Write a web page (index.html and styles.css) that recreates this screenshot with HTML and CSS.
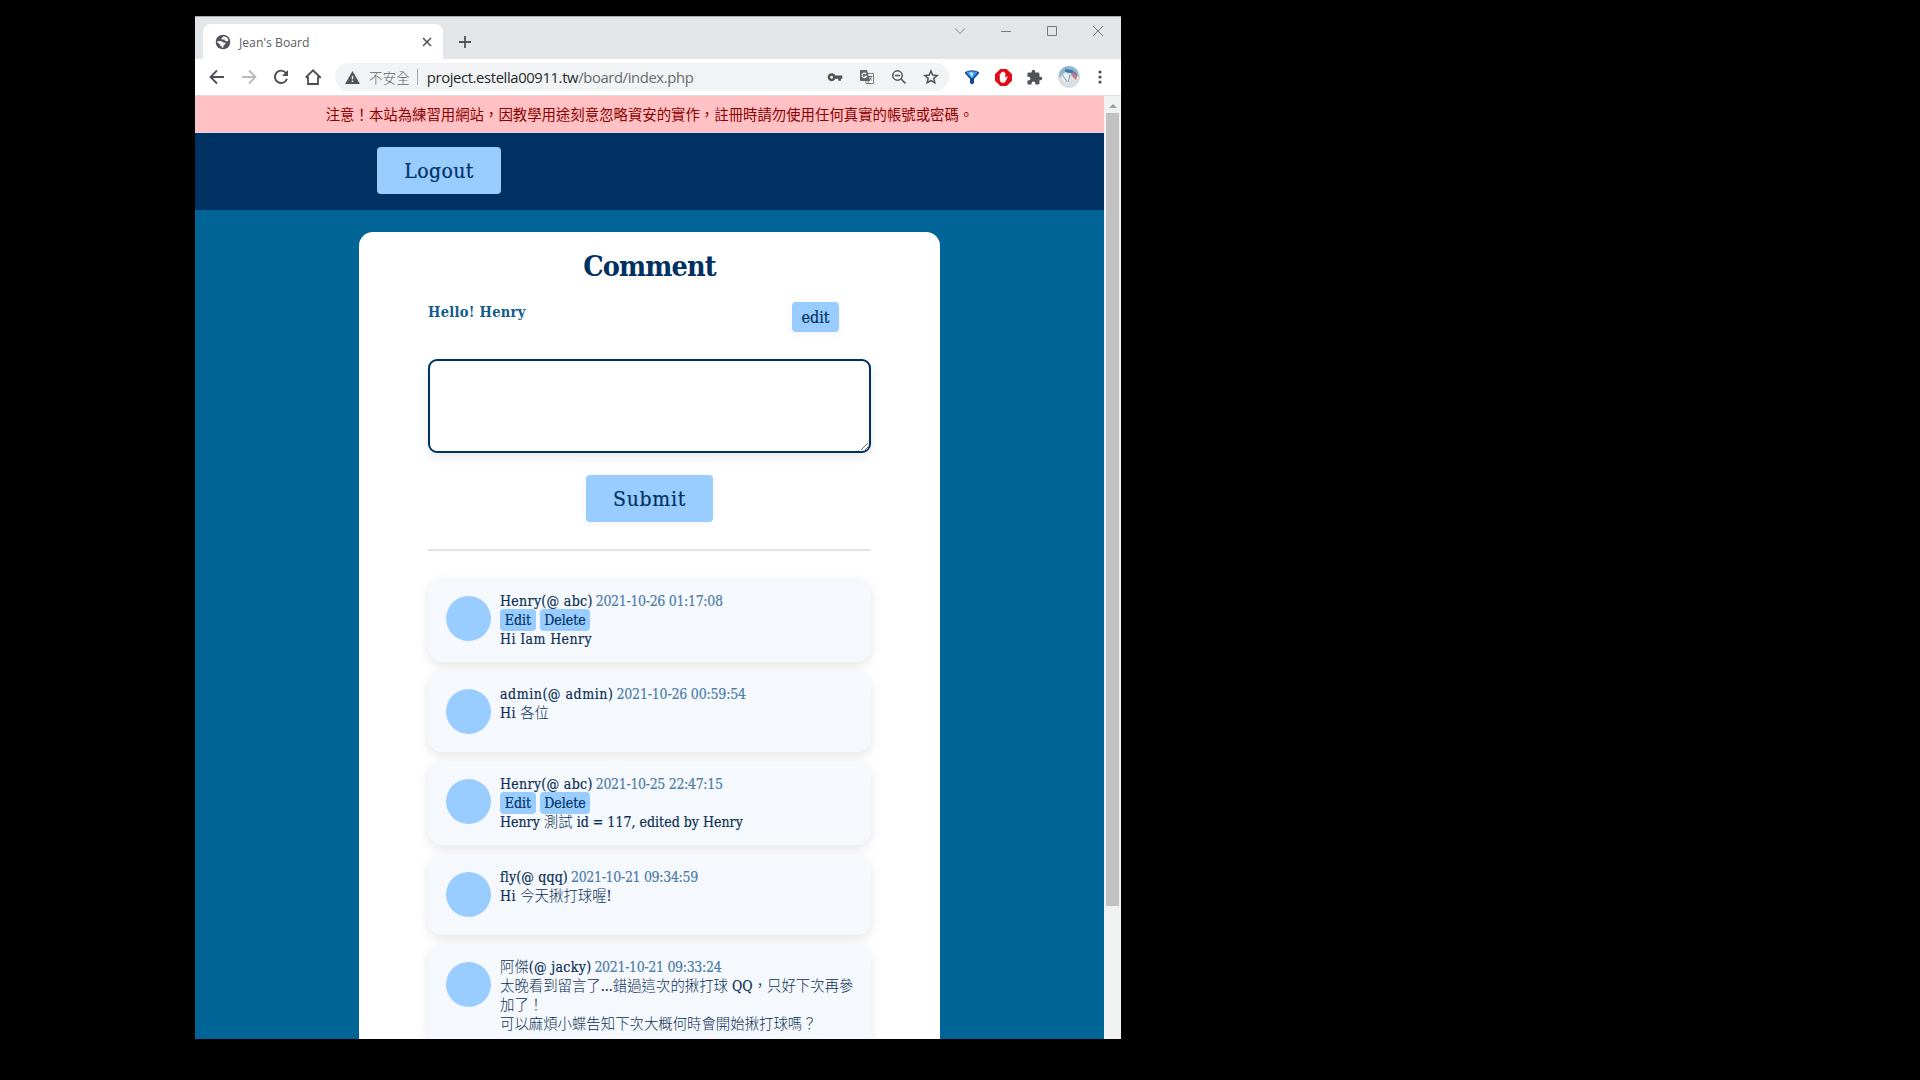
FILE: index.html
```
<!DOCTYPE html>
<html lang="zh-Hant">
<head>
<meta charset="utf-8">
<title>Jean's Board</title>
<link rel="stylesheet" href="styles.css">
</head>
<body>
<div class="window">
  <div class="tabstrip">
    <div class="tab">
      <svg class="globe" viewBox="0 0 24 24" width="16" height="16"><circle cx="12" cy="12" r="11" fill="#505357"/><path fill="#fff" d="M3.200 12.500l1-2 6 .2 2 2 3.300.5v2.300l-2.500 1-.5 3.800-2.300.5v-2.500l-2-.3-1-2.800zM10 6l3-2.800 5 2 2.500 4-2.500 2-3-1.200-1-2-4 .5z"/></svg>
      <span class="tab-title">Jean's Board</span>
      <svg class="tab-close" viewBox="0 0 10 10" width="10" height="10"><path d="M1 1l8 8M9 1L1 9" stroke="#4b4e52" stroke-width="1.500"/></svg>
    </div>
    <svg class="new-tab" viewBox="0 0 14 14" width="14" height="14"><path d="M7 1v12M1 7h12" stroke="#505357" stroke-width="1.800"/></svg>
    <div class="controls">
      <svg viewBox="0 0 12 12" width="12" height="12"><path d="M1 3.500l5 5 5-5" fill="none" stroke="#777b80"/></svg>
      <svg viewBox="0 0 12 12" width="12" height="12"><path d="M1 6.500h10" stroke="#777b80"/></svg>
      <svg viewBox="0 0 12 12" width="12" height="12"><path d="M1.500 1.500h9v9h-9z" fill="none" stroke="#777b80"/></svg>
      <svg viewBox="0 0 12 12" width="12" height="12"><path d="M1 1l10 10M11 1L1 11" stroke="#777b80"/></svg>
    </div>
  </div>
  <div class="toolbar">
    <svg viewBox="0 0 16 16" width="16" height="16"><path d="M15 8H2M8 1.500L1.500 8 8 14.500" fill="none" stroke="#4b4e52" stroke-width="1.800"/></svg>
    <svg viewBox="0 0 16 16" width="16" height="16"><path d="M1 8h13M8 1.500L14.500 8 8 14.500" fill="none" stroke="#b7b9bb" stroke-width="1.800"/></svg>
    <svg viewBox="0 0 16 16" width="16" height="16"><path d="M13.200 4.300A6.200 6.200 0 1 0 14 9.800" fill="none" stroke="#4b4e52" stroke-width="1.900"/><path d="M15 1v6H9z" fill="#4b4e52"/></svg>
    <svg viewBox="1 1 16 16" width="16" height="16"><path d="M4 8.500V16h10V8.500M1.800 9.300L9 2.300l7.200 7H14M1.800 9.300H4" fill="none" stroke="#4b4e52" stroke-width="1.800"/></svg>
    <div class="omnibox">
      <svg class="warn" viewBox="0 0 16 14" width="15" height="13"><path d="M8 0l8 14H0z" fill="#505357"/><path d="M7.200 5h1.600v4H7.200zM7.200 10.300h1.600v1.600H7.200z" fill="#f1f3f4"/></svg>
      <span class="insecure">不安全</span>
      <span class="divider"></span>
      <span class="url"><b>project.estella00911.tw</b>/board/index.php</span>
      <div class="omni-icons">
        <svg viewBox="0 0 16 16" width="16" height="16"><path fill="#505357" fill-rule="evenodd" d="M8.300 6.600h7v3.200h-1.400v2h-2.700v-2H8.300a4 4 0 1 1 0-3.200zM4.600 6.800a1.500 1.500 0 1 0 0 3 1.500 1.500 0 0 0 0-3z"/></svg>
        <svg viewBox="0 0 16 16" width="16" height="16"><path d="M7 4.500h7.500v10H7z" fill="#fff" stroke="#777b80"/><path fill="#606368" d="M1 1h7l3 11H2a1 1 0 0 1-1-1z"/><path d="M7.200 5A2.300 2.300 0 1 0 7.500 7.300H5.500" fill="none" stroke="#fff" stroke-width="1.100"/><path d="M9 7.500h4.500M11.300 6.500v1M12.500 7.800c-.5 1.700-1.300 2.700-2.500 3.700M10.500 8.500c.5 1.300 1.500 2.300 2.600 3M9 12l1 2" fill="none" stroke="#606368" stroke-width=".9"/></svg>
        <svg viewBox="0 0 16 16" width="16" height="16"><circle cx="6.500" cy="6.500" r="4.700" fill="none" stroke="#505357" stroke-width="1.500"/><path d="M4 6.500h5M10 10l4.500 4.500" stroke="#505357" stroke-width="1.600"/></svg>
        <svg viewBox="0 0 16 16" width="16" height="16"><path d="M8 2l1.700 4.100 4.500.4-3.400 2.900 1 4.400L8 11.500l-3.800 2.300 1-4.400-3.400-2.900 4.500-.4z" fill="none" stroke="#505357" stroke-width="1.500"/></svg>
      </div>
    </div>
    <div class="extensions">
      <svg viewBox="0 0 16 16" width="16" height="16"><path d="M1 3Q8-.5 15 3q.4 1.500-1 2.500L10 10v4L8 15.500 6 14v-4L2 5.500Q.6 4.500 1 3z" fill="#124a91"/><path d="M2.200 3.600Q8 1 13.500 3.500L9 9H7z" fill="#3d93e0"/><path d="M5 3.500l3 5 1.500-5z" fill="#c5e8ff"/></svg>
      <svg viewBox="0 0 16 16" width="17" height="17"><path d="M5 0h6l5 5v6l-5 5H5l-5-5V5z" fill="#e20a17"/><path d="M4.500 8V5c0-.9 1.200-.9 1.200 0V3.500c0-.9 1.300-.9 1.300 0V3c0-.9 1.400-.9 1.400 0v.7c0-.9 1.300-.9 1.300 0v4.500l1-1c.7-.6 1.400 0 1 .7L10 11.500C9.300 12.600 8.500 13 7.500 13c-1.800 0-3-1.300-3-3z" fill="#fff"/></svg>
      <svg viewBox="0 0 24 24" width="17" height="17"><path fill="#505357" d="M20.500 11H19V7a2 2 0 0 0-2-2h-4V3.500a2.500 2.500 0 0 0-5 0V5H4a2 2 0 0 0-2 2v3.800h1.500a2.700 2.700 0 0 1 0 5.400H2V20c0 1.100.9 2 2 2h3.800v-1.500a2.700 2.700 0 0 1 5.400 0V22H17a2 2 0 0 0 2-2v-4h1.500a2.500 2.500 0 0 0 0-5z"/></svg>
      <svg viewBox="0 0 22 22" width="22" height="22"><circle cx="11" cy="11" r="11" fill="#d9dee2"/><path d="M1.500 6Q5 0 11 0q7 1 9 6l1 5-4-3-6-1-5 4-5 0z" fill="#8fb3d3"/><path d="M7 3l7 1 5 4-1 3-5-4-6-1z" fill="#3f76ae"/><path d="M15 6l4 4-1 4-5-5z" fill="#cf7580"/><path d="M3 9l5-3 5 5-3 6-5-2z" fill="#eef2f4"/><path d="M4 8l5 8M12 9l-2 7" stroke="#7d93a6" stroke-width="1"/></svg>
      <svg class="menu" viewBox="0 0 4 16" width="4" height="16"><g fill="#4b4e52"><circle cx="2" cy="3" r="1.600"/><circle cx="2" cy="8" r="1.600"/><circle cx="2" cy="13" r="1.600"/></g></svg>
    </div>
  </div>
  <div class="viewport">
    <div class="page">
      <div class="notice">注意！本站為練習用網站，因教學用途刻意忽略資安的實作，註冊時請勿使用任何真實的帳號或密碼。</div>
      <nav class="navbar"><a class="btn btn-large logout">Logout</a></nav>
      <main class="board">
        <h1 class="heading">Comment</h1>
        <div class="greeting"><span class="hello">Hello! Henry</span><a class="btn btn-edit">edit</a></div>
        <textarea class="comment-input"></textarea>
        <button class="btn btn-large submit">Submit</button>
        <hr class="rule">
        <section class="list">
          <article class="card">
            <div class="avatar"></div>
            <div class="card-body">
              <div class="line"><span class="author">Henry(@ abc)</span> <span class="date">2021-10-26 01:17:08</span></div>
              <div class="line actions"><a class="btn btn-small">Edit</a><a class="btn btn-small btn-delete">Delete</a></div>
              <div class="line message">Hi Iam Henry</div>
            </div>
          </article>
          <article class="card">
            <div class="avatar"></div>
            <div class="card-body">
              <div class="line"><span class="author author-wide">admin(@ admin)</span> <span class="date date-wide">2021-10-26 00:59:54</span></div>
              <div class="line message">Hi <span class="cjk">各位</span></div>
            </div>
          </article>
          <article class="card">
            <div class="avatar"></div>
            <div class="card-body">
              <div class="line"><span class="author">Henry(@ abc)</span> <span class="date">2021-10-25 22:47:15</span></div>
              <div class="line actions"><a class="btn btn-small">Edit</a><a class="btn btn-small btn-delete">Delete</a></div>
              <div class="line">Henry <span class="cjk">測試</span> id = 117, edited by Henry</div>
            </div>
          </article>
          <article class="card">
            <div class="avatar"></div>
            <div class="card-body">
              <div class="line"><span class="author author-narrow">fly(@ qqq)</span> <span class="date">2021-10-21 09:34:59</span></div>
              <div class="line message">Hi <span class="cjk">今天揪打球喔</span>!</div>
            </div>
          </article>
          <article class="card">
            <div class="avatar"></div>
            <div class="card-body">
              <div class="line"><span class="author"><span class="cjk">阿傑</span>(@ jacky)</span> <span class="date">2021-10-21 09:33:24</span></div>
              <div class="line"><span class="cjk">太晚看到留言了</span>...<span class="cjk">錯過這次的揪打球</span> QQ<span class="cjk">，只好下次再參</span></div>
              <div class="line"><span class="cjk">加了！</span></div>
              <div class="line"><span class="cjk">可以麻煩小蝶告知下次大概何時會開始揪打球嗎？</span></div>
            </div>
          </article>
        </section>
      </main>
    </div>
    <div class="scrollbar"><div class="arrow"></div><div class="thumb"></div></div>
  </div>
</div>
</body>
</html>
```
FILE: styles.css
```
* { box-sizing: border-box; }
body {
  margin: 0;
  height: 1080px;
  padding: 16px 0 0 195px;
  background: #000;
  overflow: hidden;
  font-family: "Roboto Slab", "DejaVu Serif Condensed", "DejaVu Serif", "Noto Sans CJK TC", serif;
}
svg { display: block; flex: none; }
.window { width: 926px; height: 1023px; display: flex; flex-direction: column; background: #fff; overflow: hidden; }
.tabstrip { height: 43px; background: #e2e6e9; border-top: 1px solid #a5a8ab; display: flex; padding-left: 8px; }
.tab { width: 240px; height: 35px; margin-top: 7px; background: #fff; border-radius: 8px 8px 0 0; display: flex; align-items: center; padding: 0 11px 0 12px; }
.tab-title { margin-left: 8px; flex: 1; font: 12.2px/18px "Open Sans", sans-serif; color: #5b5e62; padding-top: 2px; }
.new-tab { margin: 18px 0 0 15px; }
.controls { margin: 8px 17px 0 auto; display: flex; gap: 34px; }
.toolbar { height: 37px; display: flex; align-items: center; padding: 0 19px 0 14px; gap: 16px; border-bottom: 1px solid #dcdee0; }
.omnibox { width: 614px; height: 28px; border-radius: 14px; background: #f1f3f4; display: flex; align-items: center; margin-left: -2px; padding: 0 10px; }
.insecure { margin-left: 9px; font: 300 13.6px/20px "Noto Sans CJK TC", sans-serif; color: #5f6368; }
.divider { width: 1px; height: 16px; background: #a5a8ab; margin: 0 9px 0 7px; }
.url { font: 14.8px/20px "Open Sans", sans-serif; letter-spacing: -0.37px; color: #686b70; white-space: nowrap; margin-top: -1px; }
.url b { font-weight: 400; color: #26282b; }
.omni-icons { margin-left: auto; display: flex; gap: 16px; }
.extensions { display: flex; align-items: center; gap: 14.5px; margin-left: -1px; }
.menu { margin-left: 4px; }
.viewport { flex: 1; min-height: 0; display: flex; }
.page { width: 909px; background: #006496; overflow: hidden; }
.notice { height: 37px; background: #ffc1c3; border-bottom: 1px solid #dcd5e4; color: #8b0000; text-align: center; white-space: nowrap; font: 14.4px/35px "Noto Sans CJK TC", sans-serif; }
.navbar { height: 77px; background: #003163; padding: 14px 0 0 182px; }
.btn { display: flex; align-items: center; justify-content: center; background: #99ccff; color: #003163; border: 0; border-radius: 4px; font-family: inherit; padding: 0; -webkit-text-stroke: 0.2px; }
.btn-large { height: 47px; font-size: 21px; letter-spacing: 0.4px; }
.logout { width: 124px; }
.board { width: 581px; height: 900px; margin: 22px 0 0 164px; padding: 15px 69px 0; border-radius: 14px; background: #fff; }
.heading { margin: 0; text-align: center; font-size: 28.5px; letter-spacing: -0.9px; line-height: 39px; color: #003163; }
.greeting { display: flex; justify-content: space-between; padding: 16px 32px 0 0; height: 73px; }
.hello { font-size: 14.5px; font-weight: 700; line-height: 20px; letter-spacing: 0.3px; color: #0f5b8c; }
.btn-edit { width: 47px; height: 30px; font-size: 16px; box-shadow: 0 2px 8px rgba(0,0,0,.05); }
.comment-input { display: block; width: 443px; height: 94px; border: 2px solid #003163; border-radius: 9px; background: #fff; resize: both; box-shadow: 0 4px 12px rgba(0,0,0,.09); }
.submit { width: 127px; margin: 22px auto 0; letter-spacing: 0.7px; box-shadow: 0 2px 8px rgba(0,0,0,.05); }
.rule { border: 0; height: 2px; background: #dfe4ec; margin: 27px 0; }
.list { display: flex; flex-direction: column; gap: 9px; }
.card { min-height: 81px; display: flex; padding: 0 16px 13px 18px; background: #f5f9fd; border-radius: 14px; box-shadow: 0 4px 12px rgba(0,0,0,.1); }
.avatar { width: 45px; height: 45px; border-radius: 50%; background: #99ccff; margin: 18px 9px 0 0; flex: none; }
.card-body { padding-top: 14px; color: #0b2f55; font-size: 14px; letter-spacing: 0.02px; -webkit-text-stroke: 0.2px; }
.line { height: 19px; line-height: 19px; white-space: nowrap; }
.author { letter-spacing: 0.33px; }
.author-wide { letter-spacing: 0.55px; }
.author-narrow { letter-spacing: 0.15px; }
.message { letter-spacing: 0.4px; }
.date { color: #4c7ba8; letter-spacing: -0.33px; margin-left: -1px; }
.date-wide { letter-spacing: -0.2px; }
.actions { display: flex; gap: 4px; }
.btn-small { width: 36px; height: 22px; margin-top: -2px; }
.btn-delete { width: 50px; }
.cjk { font-family: "Noto Sans CJK TC", sans-serif; font-weight: 300; font-size: 14.4px; line-height: 1; letter-spacing: 0; -webkit-text-stroke: 0; }
.scrollbar { width: 17px; background: #f0f1f1; display: flex; flex-direction: column; align-items: center; }
.arrow { margin-top: 8px; border: 4px solid transparent; border-top: 0; border-bottom-color: #a0a0a0; }
.thumb { margin-top: 5px; width: 13px; height: 793px; background: #c1c1c1; }
```
